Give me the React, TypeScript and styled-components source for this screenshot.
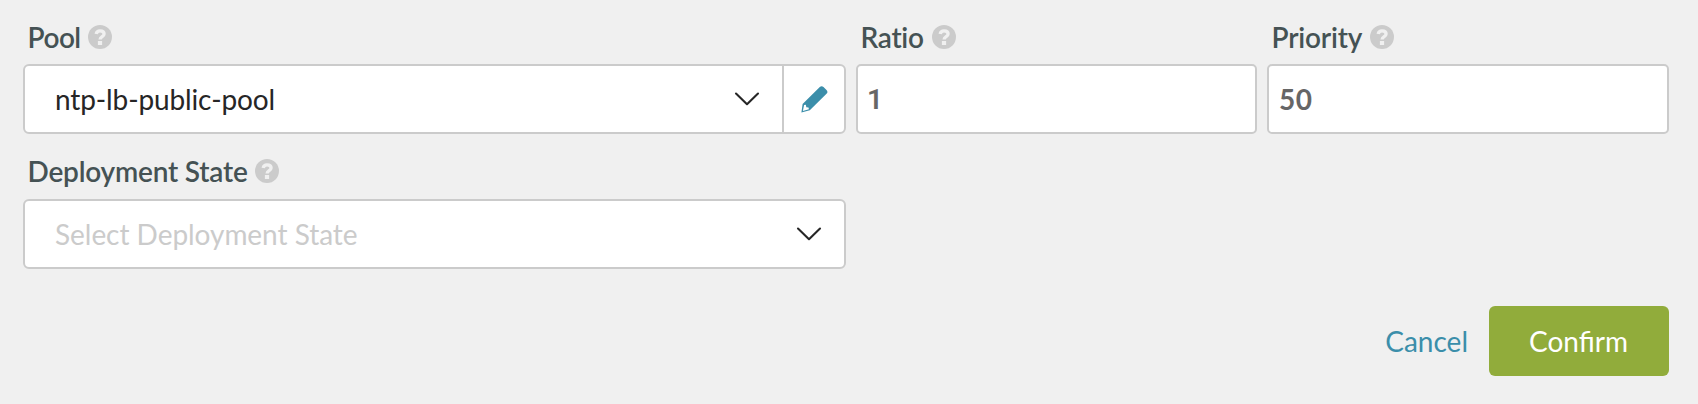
import React from "react";
import styled, { createGlobalStyle } from "styled-components";

const GlobalStyle = createGlobalStyle`
  *, *::before, *::after { box-sizing: border-box; }
  body { margin: 0; background: #f0f0f0; }
`;

const Form = styled.form`
  min-height: 404px;
  padding: 19px 29px 28px 23px;
  background: #f0f0f0;
  font: 400 28px/34px Lato, "Liberation Sans", sans-serif;
`;

const FieldGrid = styled.div`
  display: grid;
  grid-template-columns: 823px 401px 402px;
  column-gap: 10px;
  row-gap: 19px;
`;

const Field = styled.div`
  display: flex;
  flex-direction: column;
`;

const FieldHeader = styled.div<{ $height?: number }>`
  display: flex;
  align-items: flex-start;
  gap: 7px;
  height: ${(p) => p.$height ?? 45}px;
  padding-left: 4.5px;
`;

const Label = styled.label<{ $width: number; $tracking: number }>`
  width: ${(p) => p.$width}px;
  padding-top: 1px;
  color: #455254;
  font-weight: 600;
  letter-spacing: ${(p) => p.$tracking}px;
  white-space: nowrap;
`;

const HelpSvg = styled.svg`
  flex: none;
  margin-top: 6px;
`;

const ControlGroup = styled.div`
  display: flex;
  height: 70px;
  background: #fff;
  border: 2px solid #cbcbcb;
  border-radius: 6px;
`;

const Select = styled.div`
  flex: 1;
  display: flex;
  align-items: center;
  justify-content: space-between;
  padding: 0 22px 0 30px;
`;

const SelectValue = styled.span<{ $placeholder?: boolean }>`
  color: ${(p) => (p.$placeholder ? "#cbcbcb" : "#262626")};
  letter-spacing: ${(p) => (p.$placeholder ? -0.04 : -0.12)}px;
  white-space: nowrap;
`;

const ChevronSvg = styled.svg`
  flex: none;
`;

const EditButton = styled.button`
  display: flex;
  align-items: center;
  justify-content: center;
  width: 62px;
  padding: 0;
  border: 0;
  border-left: 2px solid #cbcbcb;
  background: none;
`;

const NumberInput = styled.input<{ $plainDigits?: boolean }>`
  width: 100%;
  height: 70px;
  padding: 0 ${(p) => (p.$plainDigits ? 9 : 10)}px;
  border: 2px solid #cbcbcb;
  border-radius: 5px;
  background: #fff;
  color: #666;
  font-family: ${(p) => (p.$plainDigits ? "Roboto, Lato" : "Lato")}, sans-serif;
  font-size: 28px;
  font-weight: ${(p) => (p.$plainDigits ? 600 : 700)};
  letter-spacing: 0.6px;
  outline: none;
`;

const Actions = styled.div`
  display: flex;
  justify-content: flex-end;
  gap: 21px;
  margin-top: 37px;
`;

const CancelButton = styled.button`
  padding: 0;
  border: 0;
  background: none;
  color: #3b8eaa;
  font: inherit;
`;

const ConfirmButton = styled.button`
  width: 180px;
  height: 70px;
  padding: 0 1px 0 0;
  border: 0;
  border-radius: 6px;
  background: #91ac3b;
  color: #fff;
  font: inherit;
`;

const HelpIcon = () => (
  <HelpSvg width="24" height="24" viewBox="0 0 24 24" aria-hidden="true">
    <circle cx="12" cy="12" r="12" fill="#cbcbcb" />
    <path d="M8.2 9C8.5 6.8 10 5.9 12.1 5.9c2.3 0 4 1.2 4 3.2 0 2.6-4 2.5-4 5.4" fill="none" stroke="#f0f0f0" strokeWidth="3.3" />
    <rect x="9.9" y="16" width="4.2" height="4" fill="#f0f0f0" />
  </HelpSvg>
);

const Chevron = () => (
  <ChevronSvg width="26" height="14" viewBox="0 0 26 14" aria-hidden="true">
    <path d="M2 1.6L13 12.2L24 1.6" fill="none" stroke="#262626" strokeWidth="2.1" strokeLinecap="round" strokeLinejoin="round" />
  </ChevronSvg>
);

const Pencil = () => (
  <svg width="27" height="27" viewBox="0 0 27 27" aria-hidden="true">
    <path
      fill="#3b8eaa"
      fillRule="evenodd"
      d="M18.8 1.1a2.6 2.6 0 0 1 3.7 0l3 3a2.6 2.6 0 0 1 0 3.7L8.8 24.3L.4 26.6L1.6 17.9ZM3.1 19L1.9 24.9L7.9 23.3L7.5 21.5L5.3 21.3L4.9 18.8Z"
    />
  </svg>
);

interface HeaderProps {
  text: string;
  width: number;
  tracking: number;
  height?: number;
}

const Header = ({ text, width, tracking, height }: HeaderProps) => (
  <FieldHeader $height={height}>
    <Label $width={width} $tracking={tracking}>{text}</Label>
    <HelpIcon />
  </FieldHeader>
);

export default function App() {
  return (
    <>
      <GlobalStyle />
      <Form>
        <FieldGrid>
          <Field>
            <Header text="Pool" width={53.5} tracking={-0.5} />
            <ControlGroup>
              <Select>
                <SelectValue>ntp-lb-public-pool</SelectValue>
                <Chevron />
              </Select>
              <EditButton type="button" aria-label="Edit pool">
                <Pencil />
              </EditButton>
            </ControlGroup>
          </Field>
          <Field>
            <Header text="Ratio" width={64.5} tracking={-0.27} />
            <NumberInput $plainDigits defaultValue="1" />
          </Field>
          <Field>
            <Header text="Priority" width={91.5} tracking={-0.2} />
            <NumberInput defaultValue="50" />
          </Field>
          <Field>
            <Header text="Deployment State" width={220.5} tracking={-0.2} height={46} />
            <ControlGroup>
              <Select>
                <SelectValue $placeholder>Select Deployment State</SelectValue>
                <Chevron />
              </Select>
            </ControlGroup>
          </Field>
        </FieldGrid>
        <Actions>
          <CancelButton type="button">Cancel</CancelButton>
          <ConfirmButton type="button">Confirm</ConfirmButton>
        </Actions>
      </Form>
    </>
  );
}
